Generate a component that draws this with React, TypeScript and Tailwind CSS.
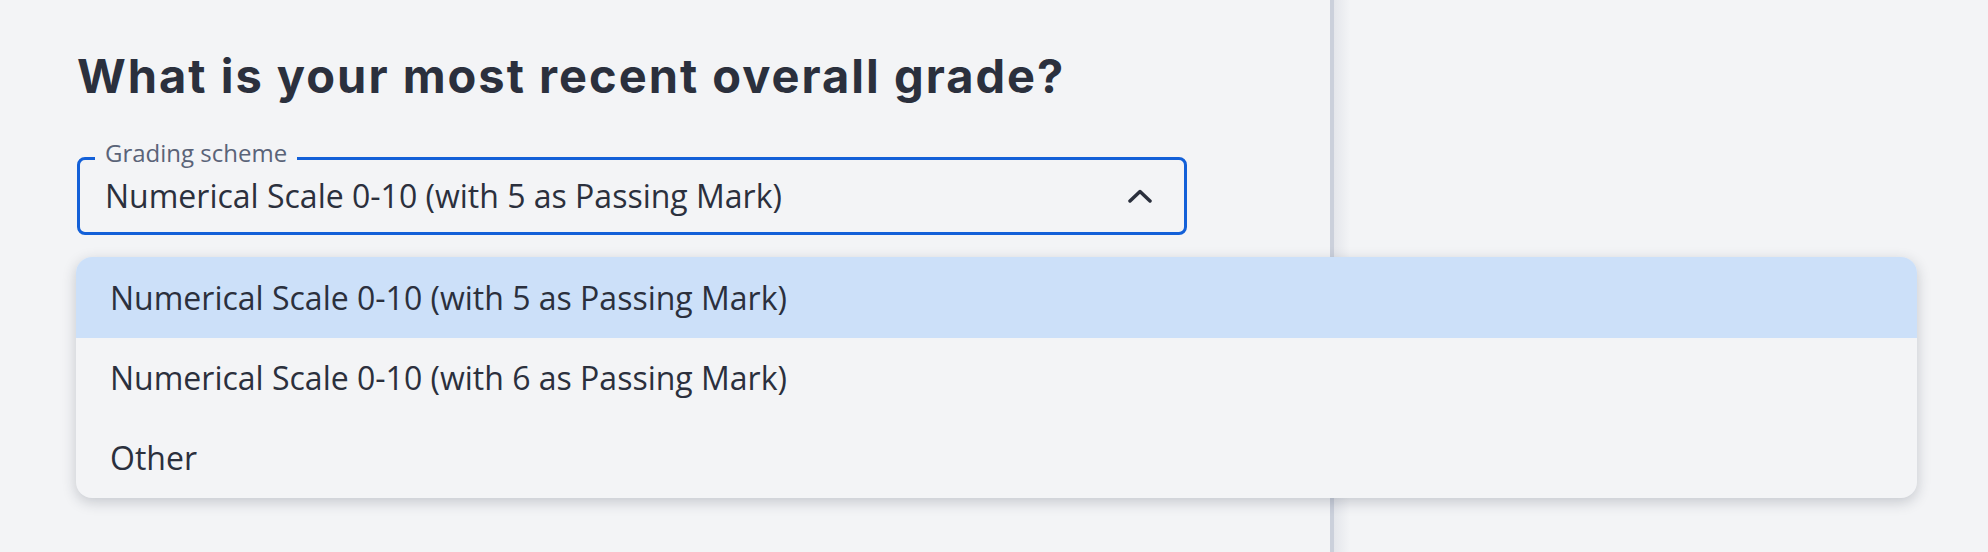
export default function App() {
  const options = [
    "Numerical Scale 0-10 (with 5 as Passing Mark)",
    "Numerical Scale 0-10 (with 6 as Passing Mark)",
    "Other",
  ];
  const selected = 0;

  return (
    <div className="relative flex h-[552px] w-[1988px] overflow-hidden bg-[#f3f4f6] font-['Open_Sans',sans-serif] text-[#2b303d]">
      {/* Question panel */}
      <div className="w-[1334px] shrink-0 border-r-[4px] border-[#cbd0db] pl-[77px] pt-[52px]">
        <h1 className="font-['Inter',sans-serif] text-[47px] font-bold leading-none tracking-[2px] text-[#2b303d]">
          What is your most recent overall grade?
        </h1>

        <div className="relative mt-[58px] flex h-[78px] w-[1110px] items-center rounded-[8px] border-[3px] border-[#1360d8] pl-[25px] pr-[32px]">
          <span className="absolute left-[15px] top-[-19px] bg-[#f3f4f6] px-[10px] text-[24px] leading-none text-[#5a6378]">
            Grading scheme
          </span>
          <span className="flex-1 text-[32px] leading-none">{options[selected]}</span>
          <svg width="24" height="14" viewBox="0 0 24 14" fill="none" className="text-[#2b303d]">
            <path d="M2 12L12 2.5L22 12" stroke="currentColor" strokeWidth="3.5" strokeLinecap="round" strokeLinejoin="round" />
          </svg>
        </div>
      </div>

      {/* Side panel */}
      <div className="flex-1 bg-[linear-gradient(90deg,#e4e6eb_0px,#f3f4f6_16px)]" />

      {/* Open listbox */}
      <ul className="absolute left-[76px] top-[257px] w-[1841px] overflow-hidden rounded-[16px] bg-[#f3f4f6] shadow-[0_4px_14px_rgba(30,40,60,0.22)]">
        {options.map((o, i) => (
          <li
            key={o}
            className={
              i === selected
                ? "flex h-[81px] items-center bg-[#cce0f9] pl-[34px] text-[32px] leading-none"
                : "flex h-[80px] items-center pl-[34px] text-[32px] leading-none"
            }
          >
            {o}
          </li>
        ))}
      </ul>
    </div>
  );
}
